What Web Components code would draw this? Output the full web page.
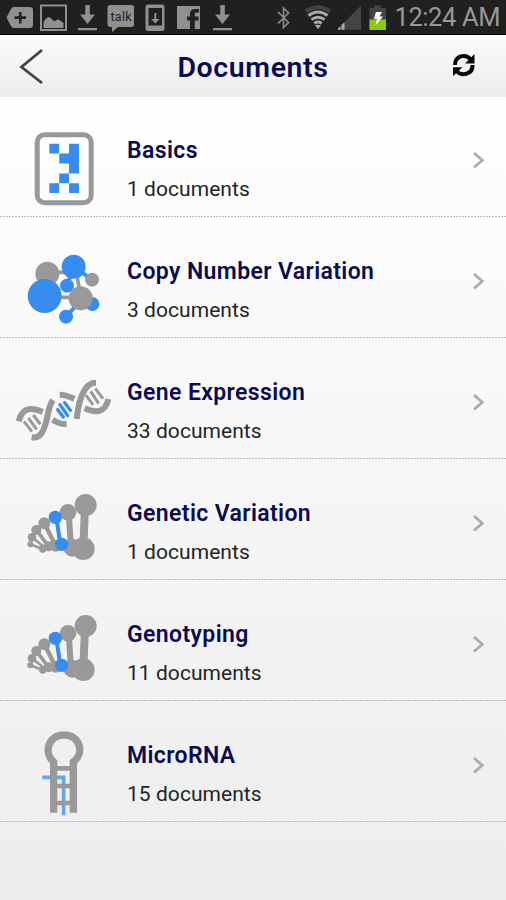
<!DOCTYPE html>
<html lang="en"><head><meta charset="utf-8"><title>Documents</title>
<style>
html,body{margin:0;height:100%}
body{font-family:Roboto,"Noto Sans",sans-serif;overflow:hidden}
</style></head><body>
<documents-screen></documents-screen>
<script>
const define=(name,html,setup)=>customElements.define(name,class extends HTMLElement{
  connectedCallback(){
    if(this.shadowRoot)return;
    const t=document.createElement('template');
    t.innerHTML=html;
    this.attachShadow({mode:'open'}).append(t.content.cloneNode(true));
    if(setup)setup(this,this.shadowRoot);
  }
});

const helix=`<g transform="translate(10 26) scale(.33333)" fill="#999" stroke="#999">
<g stroke="none"><circle cx="227" cy="60" r="33"/><circle cx="220" cy="191" r="34"/><circle cx="174" cy="82" r="25"/><circle cx="187" cy="188" r="27"/><circle cx="103" cy="115" r="18"/><circle cx="79" cy="135" r="15"/><circle cx="66" cy="157" r="13"/><circle cx="61" cy="178" r="9"/><circle cx="98" cy="192" r="11"/><circle cx="116" cy="184" r="15"/><circle cx="137" cy="182" r="18"/></g>
<path d="M225 60L220 190" stroke-width="24"/><path d="M176 82L183 190" stroke-width="18"/><path d="M103 115L137 182" stroke-width="13"/><path d="M79 135L116 184" stroke-width="11"/><path d="M66 157L106 189M61 178L98 192" stroke-width="8"/>
<g fill="#378cf0" stroke="#378cf0"><circle cx="136" cy="97" r="20" stroke="none"/><circle cx="155" cy="178" r="20" stroke="none"/><path d="M139 97L151 178" stroke-width="12"/></g></g>`;
const art={
basics:`<rect x="37.2" y="38.8" width="54" height="68" rx="7.5" fill="none" stroke="#999" stroke-width="5"/><path fill="#378cf0" d="M49.3 47.7h9.9v9.9h-9.9zM69 47.7h10v29.7H69V67.4h-9.8v-9.8H69zM59.2 77.4H69v9.8h-9.8zM49.3 87.2h9.9v9.9h-9.9zM69 87.2h10v9.9H69z"/>`,
cnv:`<g transform="translate(10 28) scale(.33333)"><g stroke="#999" fill="none"><path d="M112 82H190M104 157H212" stroke-width="11"/><path d="M198 75L213 160" stroke-width="11"/></g><g fill="#378cf0"><circle cx="247" cy="177" r="21"/><circle cx="191" cy="65" r="36"/><circle cx="168" cy="215" r="21"/><path d="M191 65L246 104M168 215L200 180M191 65L171 122" stroke="#378cf0" stroke-width="12"/></g><g fill="#999"><circle cx="112" cy="86" r="36"/><circle cx="246" cy="104" r="21"/><circle cx="212" cy="160" r="36"/></g><g fill="#378cf0"><circle cx="104" cy="153" r="51"/><circle cx="171" cy="122" r="21"/></g></g>`,
gene:`<g transform="translate(10 32) scale(.33333)" fill="none" stroke="#999"><g stroke-width="18"><path d="M26 154C36 116 58 109 98 126"/><path d="M65 202C91 206 101 184 109 154C117 119 116 108 129 90"/><path d="M128 149Q145 162 170 163M149 74Q169 74 193 87"/><path d="M200 147C204 120 204 102 217 73C226 52 237 38 258 38"/><path d="M224 115C255 129 286 130 295 87"/></g><g stroke-width="9"><path d="M42 154L66 185M55 144L80 178M70 135L91 163M228 75L249 105M242 64L266 101M256 56L279 86"/></g><g stroke="#378cf0" stroke-width="10" stroke-linecap="round"><path d="M143 119L160 141M150 104L173 137M164 98L181 121"/></g></g>`,
helix,
micro:`<g transform="translate(10 19) scale(.33333)" fill="none"><path d="M97 172H161V286" stroke="#62a6f5" stroke-width="11"/><g stroke="#999"><path d="M140 145H181M140 198H181M140 249H181" stroke-width="14"/><path d="M131 278V126C100 99 114 45 162 45S225 99 190 126V278" stroke-width="22"/></g></g>`};

define('status-bar',`<style>:host{display:block;height:35px;background:#202020;box-sizing:border-box;border-bottom:1px solid #000;color:#999}
.bar{display:flex;height:34px;align-items:center;justify-content:space-between}svg{display:block;flex:none}time{font-size:25.5px;line-height:34px;white-space:nowrap;margin-right:6px;letter-spacing:-.4px}</style>
<div class="bar"><svg width="390" height="34" viewBox="0 0 390 34"><g fill="#909090">
<path d="M14 7H30Q33 7 33 10V25Q33 28 30 28H14Q12 28 11 26L7 18.500Q6.500 17.500 7 16.500L11 9Q12 7 14 7z"/>
<path fill="#202020" d="M19 12h2.500v4.300H26V19h-4.500v4.500H19V19h-4.500v-2.700H19z"/>
<path fill-rule="evenodd" d="M40 4.500H67V31H40zM42 6.500V29H65V6.500z"/><path d="M43.500 28V22Q47 16 50 17.500L54.500 21.500Q58 18 60 20.500L63.500 23V28z"/>
<path id="d" d="M85.300 5h4.500v9.500h5.200L87.500 24L80 14.500h5.300zM78 28h19v2.300H78z"/>
<use href="#d" x="135"/>
<path d="M110.500 5H131.500Q134 5 134 7.500V24Q134 27 131.500 27H118L112 32V27H110.500Q107.500 27 107.500 24V7.500Q107.500 5 110.500 5z"/>
<path fill-rule="evenodd" d="M148 4.500H162Q164.500 4.500 164.500 7V28.500Q164.500 31 162 31H148Q145.500 31 145.500 28.500V7Q145.500 4.500 148 4.500zM148.500 8V25.500H162V8z"/><path d="M154.300 13h2v6h3.200l-4.200 4.500-4.200-4.500h3.200z"/>
<path d="M177 6H200V29H194.800V20.500H198.500V16.500H194.800V14Q194.800 12.600 196.500 12.600H199V9H195.500Q190 9 190 14V16.500H187V20.500H190V29H177z"/></g>
<text x="121" y="20.500" text-anchor="middle" font-size="12.500" fill="#202020" font-family="Roboto,sans-serif" textLength="21">talk</text>
<path d="M278 12L288.500 22.500L283.500 27.500V8L288.500 13L278 23.500" stroke="#8b8b8b" stroke-width="1.700" fill="none"/>
<g fill="none" stroke-width="4"><path d="M306 11.500Q318 3 330 11.500" stroke="#444"/><g stroke="#aaa" stroke-width="3"><path d="M308.500 15.500Q318 8.500 327.500 15.500M311.500 19.500Q318 15 324.500 19.500M314.300 23.200Q318 21 321.700 23.200"/></g></g><path d="M315 25.500Q318 24 321 25.500L318 29z" fill="#aaa"/>
<path d="M361 5.500V29.700H337z" fill="#444"/><path d="M338 29.700v-1.500l2.500-2v3.500zM341.500 29.700v-5l3-2.500v7.500z" fill="#aaa"/>
<path d="M374 5.500h7V8h5v22H369.500V8h4.500z" fill="#444"/><path d="M369.500 19.500H386V30H369.500z" fill="#8c0"/><path d="M376 12h6l-2.500 4.500H383L375.500 25.500L377 19h-3.200z" fill="#fff"/></svg><time>12:24 AM</time></div>`);

define('nav-header',`<style>:host{display:grid;grid-template-columns:80px 1fr 80px;align-items:center;height:62px;background:linear-gradient(#fcfcfc,#ebebeb)}
h1{margin:0;text-align:center;color:#0b0b50;font-size:28.5px;line-height:34px;font-weight:600;letter-spacing:.6px;padding-top:3px;white-space:nowrap}svg{display:block}</style>
<svg width="80" height="62" viewBox="0 35 80 62"><path d="M42 50L21.500 67L42 83" fill="none" stroke="#444" stroke-width="2.800"/></svg><h1><slot></slot></h1>
<svg width="80" height="62" viewBox="426 35 80 62"><g fill="none" stroke="#080808" stroke-width="4"><path d="M455 65C455 56 465 53 471 59.500"/><path d="M472.500 65C473 74 462 77 456.500 71"/></g><path d="M474.500 54V63.500H465zM453 67.300H462.500L453 76z" fill="#080808"/></svg>`);

define('document-row',`<style>:host{display:grid;grid-template-columns:127px 1fr 56px;height:121px;box-sizing:border-box;background:repeating-linear-gradient(90deg,#bcbcbc 0 2px,transparent 2px 3px) bottom/100% 1px no-repeat}
svg{display:block}.copy{display:flex;flex-direction:column;padding-top:41px;white-space:nowrap}
h2{margin:0;color:#0b0b50;font-size:23px;line-height:28px;font-weight:600;letter-spacing:.38px}
p{margin:10px 0 0;color:#242424;font-size:21px;line-height:28px;letter-spacing:.05px}</style>
<svg class="art" width="120" height="120" viewBox="0 0 120 120"></svg><div class="copy"><h2><slot></slot></h2><p><slot name="count"></slot></p></div>
<svg width="56" height="120" viewBox="450 0 56 120"><path d="M474 57L482.300 64.300L474 71.500" stroke="#aaa" stroke-width="2.700" fill="none"/></svg>`,
(host,root)=>{root.querySelector('.art').innerHTML=art[host.getAttribute('icon')];});

define('documents-screen',`<style>:host{display:flex;flex-direction:column;height:900px;overflow:hidden}main{flex:1;background:linear-gradient(#fefefe,#ededed);min-height:0}.list{margin-top:-1px}</style>
<status-bar></status-bar><nav-header>Documents</nav-header><main><div class="list">
<document-row icon="basics">Basics<span slot="count">1 documents</span></document-row>
<document-row icon="cnv">Copy Number Variation<span slot="count">3 documents</span></document-row>
<document-row icon="gene">Gene Expression<span slot="count">33 documents</span></document-row>
<document-row icon="helix">Genetic Variation<span slot="count">1 documents</span></document-row>
<document-row icon="helix">Genotyping<span slot="count">11 documents</span></document-row>
<document-row icon="micro">MicroRNA<span slot="count">15 documents</span></document-row>
</div></main>`);
</script></body></html>
